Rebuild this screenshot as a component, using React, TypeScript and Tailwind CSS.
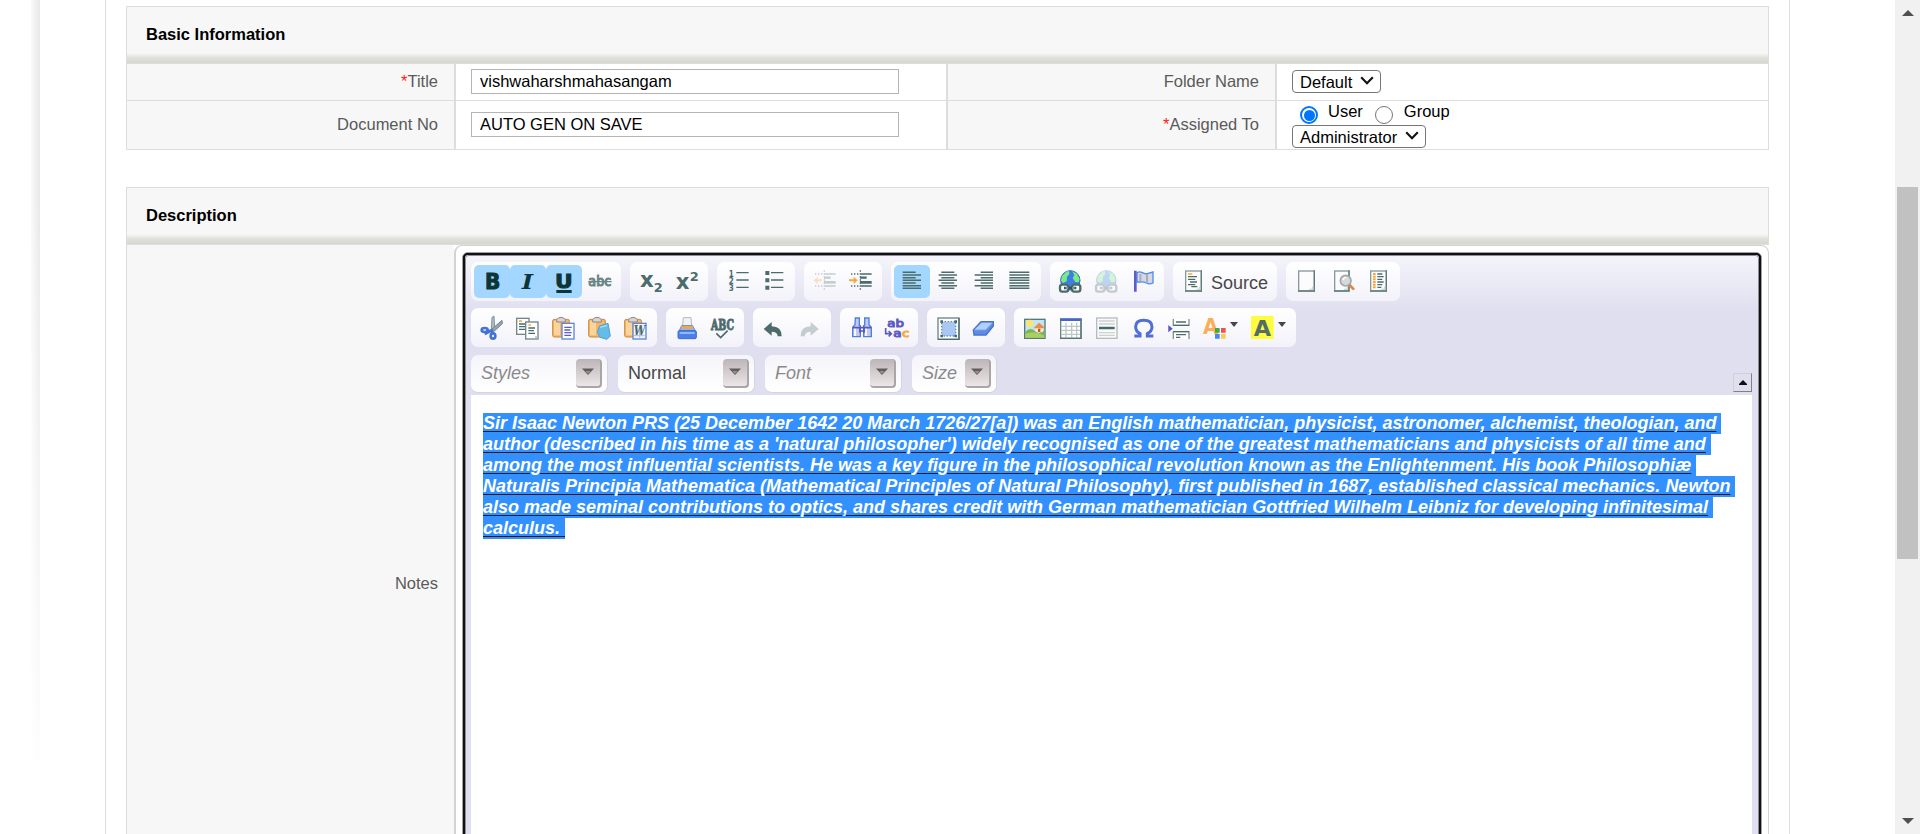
import React from "react";

const INK = "#4c6b6b";

function Icon({ children, dim }: { children: React.ReactNode; dim?: boolean }) {
  return (
    <svg
      viewBox="0 0 72 72"
      className={dim ? "h-6 w-6 overflow-visible opacity-30" : "h-6 w-6 overflow-visible"}
      fill="none"
    >
      {children}
    </svg>
  );
}

function Btn({ children, on, wide }: { children: React.ReactNode; on?: boolean; wide?: boolean }) {
  return (
    <button
      className={
        "flex h-[33px] items-center rounded-[5px] pl-1.5 " +
        (wide ? "w-12 " : "w-9 ") +
        (on ? "bg-[#a3d7ff]" : "")
      }
    >
      {children}
      {wide && (
        <svg viewBox="0 0 8 5" className="-mt-1.5 ml-[3px] h-[5px] w-2">
          <path d="M0 0H8L4 5Z" fill="#474747" />
        </svg>
      )}
    </button>
  );
}

function Group({ children }: { children: React.ReactNode }) {
  return (
    <div className="flex h-[39px] items-center rounded-[7px] bg-linear-to-b from-white to-[#f3f2fa] px-[3px]">
      {children}
    </div>
  );
}

function Glyphs({
  x, y, size, w, children, fill = INK, italic, serif, weight = 700, bold,
}: {
  x: number; y: number; size: number; w: number; children: string;
  fill?: string; italic?: boolean; serif?: boolean; weight?: number; bold?: boolean;
}) {
  return (
    <text
      x={x} y={y} fontSize={size} fill={fill} fontWeight={weight}
      stroke={bold ? fill : "none"} strokeWidth={bold ? 3 : 0}
      textLength={w} lengthAdjust="spacingAndGlyphs"
      fontFamily={serif ? "DejaVu Serif, serif" : "DejaVu Sans, sans-serif"}
      fontStyle={italic ? "italic" : "normal"}
    >
      {children}
    </text>
  );
}

function Page({ x = 9, w = 51, children }: { x?: number; w?: number; children?: React.ReactNode }) {
  return (
    <>
      <rect x={x + 2} y="3" width={w - 4} height="60" fill="#fcfcfc" stroke="#869a9a" strokeWidth="4" />
      <path d={`M${x + w - 2} 1V65M${x} 63H${x + w}`} stroke="#607d7d" strokeWidth="4" />
      <path d={`M${x + w - 5} 50V60H${x + w - 17}V56H${x + w - 9}V50Z`} fill="#cfd6d6" />
      {children}
    </>
  );
}

function Align({ rows }: { rows: [number, number][] }) {
  return (
    <>
      {rows.map(([a, b], i) => (
        <path key={i} d={`M${a} ${7 + i * 8}H${b}`} stroke={INK} strokeWidth="4.4" />
      ))}
    </>
  );
}

function Globe() {
  return (
    <>
      <circle cx="34" cy="31" r="29" fill="#3c7fe0" stroke="#3567c8" strokeWidth="3" />
      <path d="M9 18L22 5L30 3L31 13L24 20L23 34L12 39L6 32Z" fill="#7bea85" />
      <path d="M40 4L54 11L62 27L59 37L49 36L41 24L46 16Z" fill="#7bea85" />
      <rect x="3" y="44" width="25" height="21" rx="7" fill="#fff" stroke={INK} strokeWidth="7" />
      <rect x="39" y="44" width="25" height="21" rx="7" fill="#fff" stroke={INK} strokeWidth="7" />
      <path d="M15 54H52" stroke="#355555" strokeWidth="7" />
      <path d="M20 54H28M39 54H47" stroke="#c9d5d5" strokeWidth="3" />
    </>
  );
}

function Indent({ out }: { out?: boolean }) {
  return (
    <>
      <path
        d={out ? "M2 31L14 20V28H27V34H14V42Z" : "M26 31L14 20V28H0V34H14V42Z"}
        fill="#fba63c"
      />
      <path d="M6 12H30M6 48H30" stroke={INK} strokeWidth="4" strokeDasharray="4 5" />
      <path d="M34 1V63" stroke={INK} strokeWidth="4" strokeDasharray="4 5" />
      <path d="M36 12H68M36 48H68" stroke={INK} strokeWidth="4" />
      <path d="M33 23H53" stroke={INK} strokeWidth="7" />
      <path d="M33 37H68" stroke={INK} strokeWidth="8" />
    </>
  );
}

function Clipboard({ children }: { children?: React.ReactNode }) {
  return (
    <>
      <rect x="2" y="10" width="50" height="53" rx="5" fill="#f6b765" stroke="#c98a3e" strokeWidth="3" />
      <path d="M6 14H24V58H6Z" fill="#fbd49b" />
      <path d="M14 18V11Q18 4 27 4T40 11V18Z" fill="#d4d4dc" stroke="#9a8674" strokeWidth="3" />
      {children}
    </>
  );
}

function Combo({ label, small, plain }: { label: string; small?: boolean; plain?: boolean }) {
  return (
    <div
      className={
        "flex h-[38px] items-center justify-between rounded-[7px] border-r border-b border-[#d5d4e2] bg-linear-to-b from-[#f5f4fa] to-white pr-[5px] pl-2.5 " +
        (small ? "w-[85px]" : "w-[137px]")
      }
    >
      <span
        className={
          "-mt-0.5 text-[18px] leading-[22px] " + (plain ? "text-[#474747]" : "text-[#8a8a8a] italic")
        }
      >
        {label}
      </span>
      <span className="flex h-[29px] w-[26px] items-center justify-center rounded-[4px] border-r-2 border-b-2 border-[#aaa5a7] bg-linear-to-b from-[#bdb6b8] to-[#ece6e7]">
        <svg viewBox="0 0 12 7" className="-mt-0.5 h-[7px] w-3">
          <path d="M0 .5H12L6 7Z" fill="#625c5e" />
          <path d="M3.5 3H8.5L6 6Z" fill="#969092" />
        </svg>
      </span>
    </div>
  );
}

function SectionHead({ title }: { title: string }) {
  return (
    <div className="flex h-[58px] flex-col border border-[#dddddd] bg-[#f7f7f7]">
      <h2 className="flex h-[46px] items-end pb-[8px] pl-[19px] text-[16.5px] leading-[22px] font-bold text-black">
        {title}
      </h2>
      <div className="h-[10px] bg-linear-to-b from-[#f7f7f5] via-[#dfe0da] to-[#d6d7d0]" />
    </div>
  );
}

function Label({ text, required }: { text: string; required?: boolean }) {
  return (
    <div className="flex items-center justify-end border-r-2 border-[#dddddd] bg-[#f7f7f7] pr-4 pb-0.5 text-[#5a5a5a]">
      {required && <span className="text-[#ff1a1a]">*</span>}
      {text}
    </div>
  );
}

function SelectBox({ text, size }: { text: string; size: string }) {
  return (
    <div
      className={
        "flex h-[23px] items-center justify-between rounded-[4px] border border-[#767676] bg-white pr-[6px] pl-[7px] leading-[20px] text-black " +
        size
      }
    >
      <span>{text}</span>
      <svg viewBox="0 0 14 9" className="-mt-0.5 h-[9px] w-3.5">
        <path d="M1.2 1.2L7 7.2L12.8 1.2" fill="none" stroke="#111" strokeWidth="2.1" />
      </svg>
    </div>
  );
}

const TEXT_BOX = "h-[25px] w-[428px] border border-[#b5b5b5] bg-white px-2 text-[16.5px] text-black outline-none";

const NOTE_LINES = [
  "Sir Isaac Newton PRS (25 December 1642 20 March 1726/27[a]) was an English mathematician, physicist, astronomer, alchemist, theologian, and",
  "author (described in his time as a 'natural philosopher') widely recognised as one of the greatest mathematicians and physicists of all time and",
  "among the most influential scientists. He was a key figure in the philosophical revolution known as the Enlightenment. His book Philosophiæ",
  "Naturalis Principia Mathematica (Mathematical Principles of Natural Philosophy), first published in 1687, established classical mechanics. Newton",
  "also made seminal contributions to optics, and shares credit with German mathematician Gottfried Wilhelm Leibniz for developing infinitesimal",
];

function Toolbar() {
  return (
    <div className="flex h-[139px] flex-col bg-linear-to-b from-[#f4f4fa] to-[#e0dff0] to-40% pt-[6px] pl-[5px]">
      <div className="flex gap-[9px]">
        <Group>
          <Btn on><Icon><Glyphs x={15} y={56} size={62} w={46} fill="#0d3537" bold>B</Glyphs></Icon></Btn>
          <Btn on><Icon><Glyphs x={17} y={56} size={62} w={34} fill="#0d3537" italic serif>I</Glyphs></Icon></Btn>
          <Btn on>
            <Icon>
              <Glyphs x={9} y={53} size={58} w={53} fill="#0d3537" bold>U</Glyphs>
              <rect x="13" y="60" width="46" height="9" fill="#0d3537" />
            </Icon>
          </Btn>
          <Btn>
            <Icon>
              <Glyphs x={1} y={47} size={40} w={69} fill="#6b8585" weight={400} bold>abc</Glyphs>
              <path d="M1 35H71" stroke="#6b8585" strokeWidth="4" />
            </Icon>
          </Btn>
        </Group>
        <Group>
          <Btn><Icon><Glyphs x={3} y={52} size={66} w={41}>x</Glyphs><Glyphs x={44} y={65} size={38} w={27}>2</Glyphs></Icon></Btn>
          <Btn><Icon><Glyphs x={2} y={56} size={66} w={41}>x</Glyphs><Glyphs x={44} y={34} size={36} w={27}>2</Glyphs></Icon></Btn>
        </Group>
        <Group>
          <Btn>
            <Icon>
              <Glyphs x={8} y={20} size={25} w={15}>1</Glyphs>
              <Glyphs x={8} y={42} size={25} w={15}>2</Glyphs>
              <Glyphs x={8} y={64} size={25} w={15}>3</Glyphs>
              <path d="M31 8H68M31 30H68M31 52H68" stroke={INK} strokeWidth="4" />
            </Icon>
          </Btn>
          <Btn>
            <Icon>
              <path d="M10 3h12v12h-12zM10 25h12v12h-12zM10 47h12v12h-12z" fill={INK} />
              <path d="M27 8H64M27 30H64M27 52H64" stroke={INK} strokeWidth="4" />
            </Icon>
          </Btn>
        </Group>
        <Group>
          <Btn><Icon dim><Indent out /></Icon></Btn>
          <Btn><Icon><Indent /></Icon></Btn>
        </Group>
        <Group>
          <Btn on><Icon><Align rows={[[8, 47], [8, 63], [8, 47], [8, 63], [8, 47], [8, 63], [8, 63]]} /></Icon></Btn>
          <Btn><Icon><Align rows={[[16, 55], [8, 63], [16, 55], [8, 63], [16, 55], [8, 63], [16, 55]]} /></Icon></Btn>
          <Btn><Icon><Align rows={[[26, 63], [8, 63], [26, 63], [8, 63], [26, 63], [8, 63], [26, 63]]} /></Icon></Btn>
          <Btn><Icon><Align rows={[[4, 64], [4, 64], [4, 64], [4, 64], [4, 64], [4, 64], [4, 64]]} /></Icon></Btn>
        </Group>
        <Group>
          <Btn><Icon><Globe /></Icon></Btn>
          <Btn><Icon dim><Globe /></Icon></Btn>
          <Btn>
            <Icon>
              <path d="M18 8Q26 3 34 8T52 10L66 6V39Q56 44 46 39T28 36H18Z" fill="#d5d8e4" stroke="#4f8cf0" strokeWidth="4" />
              <path d="M28 12V34M48 12V38" stroke="#a9adba" strokeWidth="6" />
              <path d="M13 2V65" stroke="#5d5dc6" strokeWidth="8" />
            </Icon>
          </Btn>
        </Group>
        <Group>
          <button className="flex h-[33px] w-[98px] items-center gap-[5px] pl-1.5 text-[18px] text-[#474747]">
            <Icon>
              <Page>
                <path d="M18 12H31" stroke="#fba63c" strokeWidth="4" />
                <path d="M18 20H45M18 28H40M24 36H45M18 44H40M28 50H46" stroke={INK} strokeWidth="4" />
              </Page>
            </Icon>
            <span className="mt-0.5">Source</span>
          </button>
        </Group>
        <Group>
          <Btn><Icon><Page /></Icon></Btn>
          <Btn>
            <Icon>
              <Page w={47}>
                <path d="M55 44L69 59" stroke="#df8735" strokeWidth="8" />
                <circle cx="44" cy="32" r="16" fill="#d6d9dc" stroke="#a3a5a8" strokeWidth="5" />
                <path d="M36 30Q38 22 46 23" stroke="#fff" strokeWidth="4" />
              </Page>
            </Icon>
          </Btn>
          <Btn>
            <Icon>
              <Page>
                <path d="M22 9V57" stroke="#fba63c" strokeWidth="8" strokeDasharray="6 2" />
                <path d="M31 12H46M31 20H50M31 28H46M31 36H50M31 44H46M31 52H43" stroke={INK} strokeWidth="4" />
              </Page>
            </Icon>
          </Btn>
        </Group>
      </div>

      <div className="mt-[7px] flex gap-[9px]">
        <Group>
          <Btn>
            <Icon>
              <path d="M34 44L36 4L42 0L44 40Z" fill="#b3bdc6" stroke="#8494a0" strokeWidth="3" />
              <path d="M30 44L66 13L67 23L40 48Z" fill="#93a4b0" stroke="#718794" strokeWidth="3" />
              <ellipse cx="14" cy="42" rx="9" ry="6" stroke="#4473d8" strokeWidth="8" />
              <ellipse cx="39" cy="60" rx="7" ry="8" stroke="#4473d8" strokeWidth="8" />
              <path d="M20 45L36 44L37 54M14 54L30 46" stroke="#4473d8" strokeWidth="8" />
            </Icon>
          </Btn>
          <Btn>
            <Icon>
              <rect x="2" y="7" width="37" height="48" fill="#fff" stroke="#708888" strokeWidth="4" />
              <path d="M9 15H18" stroke="#fba63c" strokeWidth="4" />
              <path d="M9 24H29M9 32H29M9 40H29" stroke={INK} strokeWidth="4" />
              <rect x="29" y="18" width="37" height="51" fill="#fff" stroke="#708888" strokeWidth="4" />
              <path d="M37 27H45" stroke="#fba63c" strokeWidth="4" />
              <path d="M37 36H57M37 44H54M37 52H57" stroke={INK} strokeWidth="4" />
              <path d="M57 67V61H64V67Z" fill="#b9c5c5" />
            </Icon>
          </Btn>
          <Btn>
            <Icon>
              <Clipboard>
                <rect x="30" y="22" width="36" height="47" fill="#fff" stroke="#5b86df" strokeWidth="4" />
                <path d="M37 34H59M37 42H55M37 50H59M37 58H57" stroke="#5b5bcb" strokeWidth="4" />
              </Clipboard>
            </Icon>
          </Btn>
          <Btn>
            <Icon>
              <Clipboard>
                <path d="M34 30L60 22L67 60L57 70L36 64L28 49Z" fill="#65bce6" stroke="#4aa2d6" strokeWidth="3" />
                <path d="M36 34L57 28" stroke="#a5dff5" strokeWidth="4" />
              </Clipboard>
            </Icon>
          </Btn>
          <Btn>
            <Icon>
              <Clipboard>
                <rect x="27" y="22" width="39" height="47" fill="#f4f6ff" stroke="#5b86df" strokeWidth="4" />
                <path d="M30 59H62M47 27V65" stroke="#aebadd" strokeWidth="3" />
                <Glyphs x={29} y={58} size={36} w={35} italic serif>W</Glyphs>
              </Clipboard>
            </Icon>
          </Btn>
        </Group>
        <Group>
          <Btn>
            <Icon>
              <path d="M23 29L25 5H48L50 29Z" fill="#f2f2f4" stroke="#b8b8bd" strokeWidth="3" />
              <path d="M12 45L20 29H53L61 45Z" fill="#8eb5f3" stroke="#5e8ee0" strokeWidth="3" />
              <path d="M18 38H54V30H20Z" fill="#f2a845" />
              <rect x="9" y="44" width="55" height="24" rx="4" fill="#4c80e6" stroke="#3b6fd7" strokeWidth="3" />
              <path d="M14 51H59" stroke="#8db8ff" strokeWidth="6" />
            </Icon>
          </Btn>
          <Btn>
            <Icon>
              <Glyphs x={0} y={41} size={42} w={69} serif bold>ABC</Glyphs>
              <path d="M16 52L29 65L50 44" stroke={INK} strokeWidth="5" />
            </Icon>
          </Btn>
        </Group>
        <Group>
          <Btn><Icon><path d="M5 39L29 18V31Q59 31 59 61H47Q47 47 29 47V59Z" fill={INK} /></Icon></Btn>
          <Btn><Icon dim><path d="M62 39L38 18V31Q8 31 8 61H20Q20 47 38 47V59Z" fill={INK} /></Icon></Btn>
        </Group>
        <Group>
          <Btn>
            <Icon>
              <path d="M19 6H31V29H34V62H11V34L18 26Z" fill="#c3c9e6" stroke="#4d7fe2" strokeWidth="4" />
              <path d="M47 6H60V26L67 34V62H44V29H47Z" fill="#c3c9e6" stroke="#4d7fe2" strokeWidth="4" />
              <path d="M12 35H66M33 32V50M45 32V50M30 45H48" stroke="#5656be" strokeWidth="5" />
              <path d="M18 38V60M51 38V60" stroke="#fff" strokeWidth="5" />
            </Icon>
          </Btn>
          <Btn>
            <Icon>
              <Glyphs x={7} y={32} size={34} w={50} fill="#5b5bc4" weight={400} bold>ab</Glyphs>
              <Glyphs x={25} y={64} size={34} w={25} fill="#5b5bc4" weight={400} bold>a</Glyphs>
              <Glyphs x={51} y={64} size={34} w={22} fill="#fba63c" weight={400} bold>c</Glyphs>
              <path d="M2 36V53H17M11 45L19 53L11 61" stroke="#5b5bc4" strokeWidth="5" />
            </Icon>
          </Btn>
        </Group>
        <Group>
          <Btn>
            <Icon>
              <rect x="6" y="6" width="63" height="64" fill="#fff" stroke="#6d8585" strokeWidth="4" />
              <path d="M6 70H69V6" stroke="#4f6c6c" strokeWidth="4" />
              <rect x="17" y="17" width="42" height="43" fill="#a9c7f3" />
              <rect x="17" y="17" width="42" height="43" stroke="#6288bd" strokeWidth="4" strokeDasharray="4 5" />
              <path d="M13 13h8v8h-8zM55 13h8v8h-8zM13 56h8v8h-8zM55 56h8v8h-8z" fill={INK} />
            </Icon>
          </Btn>
          <Btn>
            <Icon>
              <path d="M4 42L27 17H64V30L42 57H6Z" fill="#5c8de5" stroke="#4a73cf" strokeWidth="4" />
              <path d="M7 41L29 20H61L41 42Z" fill="#b3d0fc" />
              <path d="M7 42H41L62 20" stroke="#7da8f0" strokeWidth="3" />
            </Icon>
          </Btn>
        </Group>
        <Group>
          <Btn>
            <Icon>
              <rect x="5" y="10" width="61" height="57" fill="#bfe5f8" stroke="#587777" strokeWidth="4" />
              <circle cx="20" cy="22" r="11" fill="#ffe36b" />
              <path d="M7 47Q22 32 36 45T64 42V65H7Z" fill="#7eb356" />
              <path d="M7 54Q32 42 64 59V65H7Z" fill="#a8cf62" />
              <path d="M38 32H60V48H38Z" fill="#ffe9c9" />
              <path d="M31 37L48 20L64 34V37Z" fill="#f08a45" />
              <rect x="45" y="38" width="7" height="10" fill="#a46233" />
            </Icon>
          </Btn>
          <Btn>
            <Icon>
              <rect x="5" y="10" width="61" height="57" fill="#fff" stroke="#6b8484" strokeWidth="4" />
              <path d="M3 11H68" stroke="#4767c8" strokeWidth="8" />
              <path d="M7 31H64M7 43H64M7 55H64M21 20V65M38 20V65M53 20V65" stroke="#bcc7c7" strokeWidth="4" />
              <path d="M3 67H68M66 16V69" stroke="#587474" strokeWidth="4" />
            </Icon>
          </Btn>
          <Btn>
            <Icon>
              <rect x="5" y="6" width="61" height="61" fill="#fafafa" stroke="#b7bdbd" strokeWidth="4" />
              <path d="M12 15H59M12 24H59M12 50H59M12 58H59" stroke="#ccd1d1" strokeWidth="4" />
              <path d="M12 36H59" stroke="#486969" strokeWidth="7" />
            </Icon>
          </Btn>
          <Btn>
            <Icon>
              <path
                d="M10 60H27V53Q14 46 14 33C14 19 24 13 38 13S63 19 63 33Q63 46 49 53V60H67"
                stroke="#4f6fd2" strokeWidth="9"
              />
            </Icon>
          </Btn>
          <Btn>
            <Icon>
              <path d="M4 27V49L17 38Z" fill="#5454c4" />
              <path d="M19 9V28H66V9" stroke="#809595" strokeWidth="4" fill="#fff" />
              <path d="M27 18H57" stroke={INK} strokeWidth="4" />
              <path d="M19 69V47H66V69" stroke="#809595" strokeWidth="4" fill="#fff" />
              <path d="M27 56H57M27 64H40" stroke={INK} strokeWidth="4" />
              <path d="M19 28H66M19 47H66" stroke={INK} strokeWidth="4" />
            </Icon>
          </Btn>
          <Btn wide>
            <Icon>
              <Glyphs x={0} y={55} size={62} w={46} fill="#fbae59">A</Glyphs>
              <path d="M36 36h14v14h-14z" fill="#42aa42" />
              <path d="M54 36h14v14h-14z" fill="#f05050" />
              <path d="M36 54h14v14h-14z" fill="#4387f5" />
              <path d="M54 54h14v14h-14z" fill="#f8cc50" />
            </Icon>
          </Btn>
          <Btn wide>
            <Icon>
              <rect width="68" height="69" fill="#fdfd3d" />
              <Glyphs x={8} y={59} size={62} w={52} fill="#536d68">A</Glyphs>
            </Icon>
          </Btn>
        </Group>
      </div>

      <div className="mt-2 flex items-start gap-[10px]">
        <Combo label="Styles" />
        <Combo label="Normal" plain />
        <Combo label="Font" />
        <Combo label="Size" small />
        <button className="mt-[18px] mr-[6px] ml-auto flex h-[19px] w-[19px] items-center justify-center border border-t-[#d0d0d6] border-r-[#808080] border-b-[#808080] border-l-[#d0d0d6]">
          <svg viewBox="0 0 8 5" className="h-[5px] w-2">
            <path d="M4 0L8 4V5H0V4Z" fill="#111" />
          </svg>
        </button>
      </div>
    </div>
  );
}

export default function App() {
  return (
    <div className="flex h-[834px] w-full overflow-hidden bg-white font-['Liberation_Sans',Arial,sans-serif] text-[16.5px] leading-[20px]">
      <div className="w-[105px] shrink-0 pl-[31px]">
        <div className="h-[760px] w-[9px] bg-linear-to-r from-[#fafafa] to-[#e8e8e8]">
          <div className="h-full bg-linear-to-b from-transparent from-25% to-white/90" />
        </div>
      </div>

      <main className="h-full w-[1685px] shrink-0 border-x border-[#dddddd] px-5 pt-1.5">
        <section>
          <SectionHead title="Basic Information" />
          <div className="grid h-[86px] grid-cols-[329px_492px_329px_1fr] grid-rows-[37px_49px] border-x border-[#dddddd] *:border-b *:border-[#dddddd]">
            <Label text="Title" required />
            <div className="flex items-center border-r-2 pb-0.5 pl-[15px]">
              <input className={TEXT_BOX} defaultValue="vishwaharshmahasangam" />
            </div>
            <Label text="Folder Name" />
            <div className="flex items-center pb-px pl-[15px]">
              <SelectBox text="Default" size="w-[89px]" />
            </div>
            <Label text="Document No" />
            <div className="flex items-center border-r-2 pb-0.5 pl-[15px]">
              <input className={TEXT_BOX} defaultValue="AUTO GEN ON SAVE" />
            </div>
            <Label text="Assigned To" required />
            <div className="flex flex-col pl-[15px] text-black">
              <div className="flex h-6 pl-2">
                <span className="mt-[5px] flex h-[18px] w-[18px] items-center justify-center rounded-full border-2 border-[#0075ff]">
                  <span className="h-[11px] w-[11px] rounded-full bg-[#0075ff]" />
                </span>
                <span className="ml-[10px]">User</span>
                <span className="mt-[5px] ml-[12px] h-[18px] w-[18px] rounded-full border-[1.5px] border-[#767676]" />
                <span className="ml-[11px]">Group</span>
              </div>
              <SelectBox text="Administrator" size="w-[134px]" />
            </div>
          </div>
        </section>

        <section className="mt-[37px]">
          <SectionHead title="Description" />
          <div className="grid h-[676px] grid-cols-[327px_1fr] border-l border-[#dddddd]">
            <div className="flex items-center justify-end bg-[#f7f7f7] pr-4 text-[#5a5a5a]">Notes</div>
            <div className="rounded-t-[8px] border border-l-2 border-[#d3d3d3] px-[6px] pt-[6px]">
              <div className="h-full rounded-t-[6px] border border-[#a0a0a0] bg-[#111]">
                <div className="h-full rounded-t-[5px] border-2 border-[#111] bg-[#e0dff0]">
                  <div className="h-full overflow-hidden rounded-t-[4px] border border-[#8e8e98] bg-[#e0dff0]">
                    <Toolbar />
                    <div className="mr-[6px] ml-[5px] h-full bg-white pt-[18px] pl-3 text-[18px] leading-[21px] font-bold whitespace-pre text-white italic">
                      {NOTE_LINES.map((line) => (
                        <div key={line} className="h-[21px] w-max bg-[#3390ff]">
                          <span className="underline decoration-[#141c24] decoration-1 underline-offset-[2px]">{line}</span>{" "}
                        </div>
                      ))}
                      <div className="h-[21px] w-max bg-[#3390ff] underline decoration-[#141c24] decoration-1 underline-offset-[2px]">
                        {"calculus. "}
                      </div>
                    </div>
                  </div>
                </div>
              </div>
            </div>
          </div>
        </section>
      </main>

      <aside className="ml-auto flex w-[25px] shrink-0 flex-col items-center bg-[#f1f1f1] pt-2.5 pb-2.5">
        <svg viewBox="0 0 12 6" className="h-1.5 w-3">
          <path d="M6 0L12 6H0Z" fill="#505050" />
        </svg>
        <div className="mt-[171px] h-[372px] w-[21px] bg-[#c1c1c1]" />
        <svg viewBox="0 0 12 6" className="mt-auto h-1.5 w-3">
          <path d="M0 0H12L6 6Z" fill="#505050" />
        </svg>
      </aside>
    </div>
  );
}
